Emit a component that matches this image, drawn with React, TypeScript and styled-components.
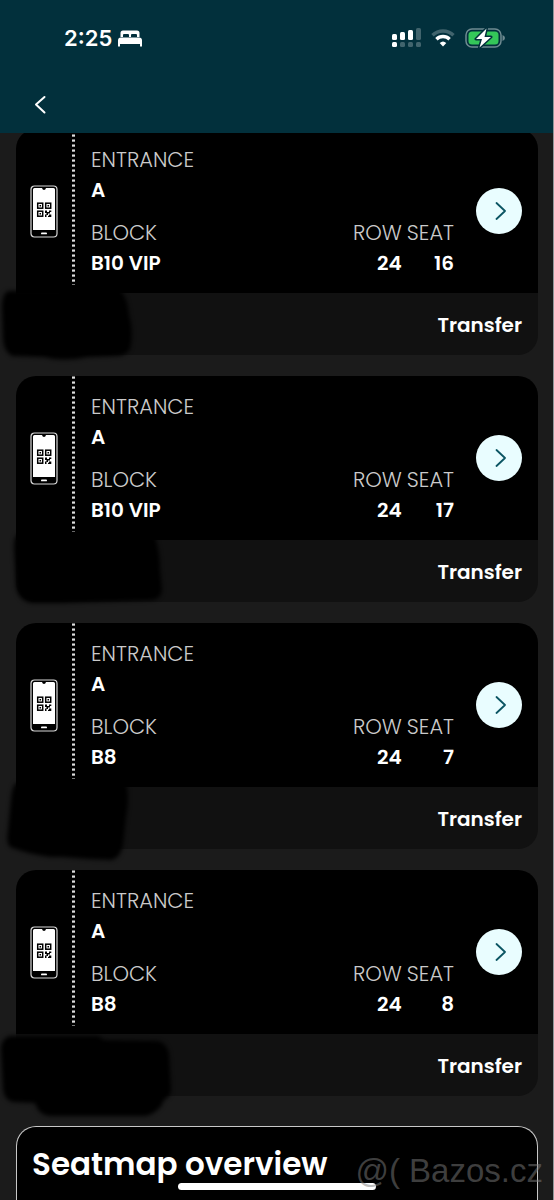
import React from 'react';
import styled, { createGlobalStyle } from 'styled-components';

const GlobalStyle = createGlobalStyle`
  * { box-sizing: border-box; }
  body { margin: 0; background: #1b1b1b; }
  button { border: 0; padding: 0; background: none; color: inherit; font: inherit; cursor: pointer; }
  h2, dl, dt, dd { margin: 0; font-weight: inherit; }
`;

const Screen = styled.div`
  position: relative;
  height: 100vh;
  overflow: hidden;
  display: flex;
  flex-direction: column;
  border-right: 1px solid #8f9698;
  background: #1b1b1b;
  color: #fff;
  font-family: Poppins, Inter, sans-serif;
`;

const Header = styled.header`
  position: relative;
  z-index: 1;
  flex: none;
  height: 133px;
  background: #02303c;
`;

const StatusBar = styled.div`
  display: flex;
  justify-content: space-between;
  align-items: center;
  height: 76px;
  padding: 0 48px 0 64px;
  font: 600 22px/28px Inter, sans-serif;
`;

const StatusGroup = styled.div<{ $gap: number }>`
  display: flex;
  align-items: center;
  gap: ${(p) => p.$gap}px;
`;

const BackButton = styled.button`
  display: flex;
  margin-left: 24px;
  padding: 16px 8px;
`;

const Content = styled.main`
  flex: 1;
  display: flex;
  flex-direction: column;
  margin-top: -4px;
  padding: 0 15px 0 16px;
`;

const TicketList = styled.div`
  display: flex;
  flex-direction: column;
  gap: 21px;
`;

const Ticket = styled.article`
  position: relative;
`;

const TicketBody = styled.div`
  display: flex;
  align-items: center;
  height: 164px;
  padding-right: 16px;
  border-radius: 20px 20px 0 0;
  background: #000;
`;

const Stub = styled.div`
  display: flex;
  align-items: center;
  justify-content: center;
  width: 56px;
`;

const Perforation = styled.div`
  align-self: stretch;
  width: 3px;
  margin-bottom: 8px;
  background: repeating-linear-gradient(#777 0 1px, #ddd 1px 2px, #999 2px 3px, transparent 3px 5px);
`;

const Details = styled.dl`
  flex: 1;
  display: grid;
  grid-template-columns: 1fr auto auto;
  column-gap: 5px;
  row-gap: 11px;
  padding: 0 22px 0 16px;
`;

const Field = styled.div<{ $wide?: boolean; $right?: boolean }>`
  grid-column: ${(p) => (p.$wide ? '1 / -1' : 'auto')};
  text-align: ${(p) => (p.$right ? 'right' : 'left')};
`;

const Label = styled.dt`
  font-size: 21px;
  line-height: 31px;
  && { font-weight: 300; }
  color: #cacaca;
`;

const Value = styled.dd`
  font-size: 20px;
  line-height: 31px;
  && { font-weight: 600; }
`;

const OpenButton = styled.button`
  display: flex;
  align-items: center;
  justify-content: center;
  width: 46px;
  height: 46px;
  && { border-radius: 50%; background: #e9fdff; }
`;

const TicketFooter = styled.div`
  display: flex;
  align-items: center;
  justify-content: flex-end;
  height: 62px;
  padding: 2px 16px 0 0;
  border-radius: 0 0 20px 20px;
  background: #111;
`;

const TransferButton = styled.button`
  && { font-size: 20px; line-height: 30px; font-weight: 600; }
`;

const Scribble = styled.svg`
  position: absolute;
  left: -16px;
  top: 156px;
  filter: blur(2px);
  pointer-events: none;
`;

const Seatmap = styled.section`
  flex: 1;
  margin-top: 30px;
  padding: 16px 15px;
  border: 1px solid #c8c8c8;
  border-bottom: 0;
  border-radius: 20px 20px 0 0;
  background: #000;
`;

const SeatmapTitle = styled.h2`
  && { font-weight: 600; }
  font-size: 31px;
  line-height: 42px;
`;

const HomeIndicator = styled.div`
  position: absolute;
  left: 50%;
  bottom: 10px;
  width: 198px;
  height: 7px;
  margin-left: -99px;
  border-radius: 4px;
  background: #fff;
`;

const Watermark = styled.div`
  position: absolute;
  right: 10px;
  bottom: 12px;
  font: 33px/34px 'Liberation Sans', sans-serif;
  color: rgba(125, 125, 125, 0.5);
`;

const BedIcon = () => (
  <svg width="24" height="17" viewBox="0 0 24 17" fill="#fff" aria-hidden="true">
    <path d="M2.500 7V3A2.500 2.500 0 0 1 5 .5h14A2.500 2.500 0 0 1 21.500 3v4H19V5a1 1 0 0 0-1-1h-4a1 1 0 0 0-1 1v2h-2V5a1 1 0 0 0-1-1H6a1 1 0 0 0-1 1v2z" />
    <path d="M3 7.500h18a3 3 0 0 1 3 3V16.500h-2V14H2v2.500H0v-6a3 3 0 0 1 3-3z" />
  </svg>
);

const SignalIcon = () => (
  <svg width="29" height="20" viewBox="0 0 29 20" fill="#fff" aria-hidden="true">
    <rect x="0" y="6" width="5" height="6" rx="1.500" />
    <rect x="8" y="4" width="5" height="8" rx="1.500" />
    <rect x="16" y="2" width="5" height="10" rx="1.500" />
    <rect x="24" y="0" width="5" height="12" rx="1.500" opacity=".25" />
    <rect x="0" y="14" width="5" height="5" rx="1.500" />
    <rect x="8" y="14" width="5" height="5" rx="1.500" opacity=".25" />
    <rect x="16" y="14" width="5" height="5" rx="1.500" opacity=".25" />
    <rect x="24" y="14" width="5" height="5" rx="1.500" opacity=".25" />
  </svg>
);

const WifiIcon = () => (
  <svg width="24" height="18" viewBox="0 0 24 18" fill="none" stroke="#fff" strokeWidth="3.400" aria-hidden="true">
    <path d="M1.500 6.300a15 15 0 0 1 21 0" opacity=".25" />
    <path d="M5.400 10.200a9.500 9.500 0 0 1 13.200 0" />
    <path d="M12 17.500l-3.300-3.400a4.800 4.800 0 0 1 6.600 0z" fill="#fff" stroke="none" />
  </svg>
);

const BatteryIcon = () => (
  <svg width="40" height="22" viewBox="0 0 40 22" aria-hidden="true">
    <rect x="1" y="2" width="35" height="18" rx="6" fill="none" stroke="#6f8a91" strokeWidth="1.500" />
    <path d="M37.500 8q2.500 1 2.500 3t-2.500 3z" fill="#6f8a91" />
    <rect x="3.500" y="4.500" width="30" height="13" rx="3.500" fill="#34c759" />
    <path d="M21.500 1.500L11 12h6l-2.500 8.500L26 10h-6.500z" fill="#fff" stroke="#02303c" strokeWidth="3" paintOrder="stroke" strokeLinejoin="round" />
  </svg>
);

const PhoneIcon = () => (
  <svg width="28" height="53" viewBox="0 0 28 53" aria-hidden="true">
    <rect x="1" y="1" width="26" height="51" rx="3.500" fill="#000" stroke="#d8d8d8" strokeWidth="1.200" />
    <path d="M3 4.500Q3 3 4.500 3H12q.5 2 2 2t2-2h7.500Q25 3 25 4.500V45H3z" fill="#fff" />
    <rect x="11" y="47.500" width="6" height="1.800" rx=".9" fill="#fff" />
    <g fill="none" stroke="#000" strokeWidth="1.500">
      <rect x="7.700" y="18.200" width="5" height="5" />
      <rect x="15.700" y="18.200" width="5" height="5" />
      <rect x="7.700" y="26.200" width="5" height="5" />
    </g>
    <path d="M9.500 20h1.500v1.500H9.500zM17.500 20H19v1.500h-1.500zM9.500 28H11v1.500H9.500zM15 25.500h2V27h2v-1.500h2.300V27H20v1.500h-2V30h-1.500v2H15v-2.500h1.500V28H15zM19 29.500h2.300V32H18v-1.200h1z" fill="#000" />
  </svg>
);

const Chevron = ({ left }: { left?: boolean }) =>
  left ? (
    <svg width="16" height="24" viewBox="0 0 16 24" fill="none" stroke="#fff" strokeWidth="2" strokeLinecap="round" strokeLinejoin="round" aria-hidden="true">
      <path d="M12.500 5L4 12.500l8.500 8" />
    </svg>
  ) : (
    <svg width="14" height="22" viewBox="0 0 14 22" fill="none" stroke="#0b5563" strokeWidth="1.800" strokeLinecap="round" strokeLinejoin="round" aria-hidden="true">
      <path d="M4.500 3l8.500 8-8.500 8" />
    </svg>
  );

const tickets = [
  { block: 'B10 VIP', row: 24, seat: 16, cover: 'M8 6L120 4Q128 14 129 30Q134 46 130 64Q126 71 116 71L88 72Q62 77 44 72L12 71Q4 67 3 54L2 20Q3 8 8 6z' },
  { block: 'B10 VIP', row: 24, seat: 17, cover: 'M18 2L154 2Q160 18 160 38L162 58Q161 67 152 68L60 71L32 71Q18 69 16 54L14 16Q14 4 18 2z' },
  { block: 'B8', row: 24, seat: 7, cover: 'M16 4L126 4Q130 18 126 38L123 66Q121 78 112 81L88 80L62 78L50 78Q28 75 10 68Q6 64 8 52L11 20Q12 8 16 4z' },
  { block: 'B8', row: 24, seat: 8, cover: 'M10 10L98 10L104 14L158 15Q167 17 169 28L171 64Q171 70 164 74Q160 86 146 90L50 90Q38 89 35 77L14 76Q4 75 3 62L1 22Q2 12 10 10z' },
];

export default function App() {
  return (
    <Screen>
      <GlobalStyle />
      <Header>
        <StatusBar>
          <StatusGroup $gap={6}>
            <span>2:25</span>
            <BedIcon />
          </StatusGroup>
          <StatusGroup $gap={10}>
            <SignalIcon />
            <WifiIcon />
            <BatteryIcon />
          </StatusGroup>
        </StatusBar>
        <BackButton aria-label="Back">
          <Chevron left />
        </BackButton>
      </Header>
      <Content>
        <TicketList>
          {tickets.map((t, i) => (
            <Ticket key={i}>
              <TicketBody>
                <Stub>
                  <PhoneIcon />
                </Stub>
                <Perforation />
                <Details>
                  <Field $wide>
                    <Label>ENTRANCE</Label>
                    <Value>A</Value>
                  </Field>
                  <Field>
                    <Label>BLOCK</Label>
                    <Value>{t.block}</Value>
                  </Field>
                  <Field $right>
                    <Label>ROW</Label>
                    <Value>{t.row}</Value>
                  </Field>
                  <Field $right>
                    <Label>SEAT</Label>
                    <Value>{t.seat}</Value>
                  </Field>
                </Details>
                <OpenButton aria-label="Open ticket">
                  <Chevron />
                </OpenButton>
              </TicketBody>
              <TicketFooter>
                <TransferButton>Transfer</TransferButton>
              </TicketFooter>
              <Scribble width="180" height="95" viewBox="0 0 180 95" aria-hidden="true">
                <path d={t.cover} />
              </Scribble>
            </Ticket>
          ))}
        </TicketList>
        <Seatmap>
          <SeatmapTitle>Seatmap overview</SeatmapTitle>
        </Seatmap>
      </Content>
      <HomeIndicator />
      <Watermark>@( Bazos.cz</Watermark>
    </Screen>
  );
}
